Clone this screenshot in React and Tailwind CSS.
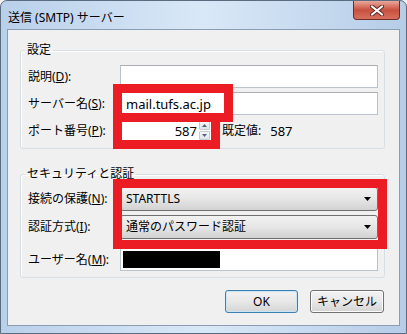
const Key = ({ children }) => <span className="underline">{children}</span>;

function Field({ children, className = '' }) {
  return (
    <div className={`h-[23px] bg-white border border-[#b9c3ce] border-t-[#abadb3] flex items-center ${className}`}>
      {children}
    </div>
  );
}

function Combo({ children }) {
  return (
    <div className="h-[24px] flex items-center justify-between pl-[5px] pr-[6px] rounded-[3px] border border-[#707070] bg-gradient-to-b from-[#f2f2f2] via-[#e6e6e6] to-[#d2d2d2]">
      <span className="leading-[16px]">{children}</span>
      <svg width="7" height="4" viewBox="0 0 7 4"><path d="M0 0h7L3.5 4z" fill="#000" /></svg>
    </div>
  );
}

function Row({ label, children }) {
  return (
    <div className="flex items-center">
      <div className="w-[92px] leading-[16px] whitespace-nowrap">{label}</div>
      <div className="flex-1">{children}</div>
    </div>
  );
}

export default function App() {
  return (
    <div className="relative w-[407px] h-[334px] overflow-hidden bg-[#f0f0f0] font-['Noto_Sans','Noto_Sans_CJK_JP',sans-serif] text-[12px] text-black">
      <div className="flex flex-col h-full rounded-t-[7px] border border-[#5b6c80] bg-gradient-to-r from-[#b9d0ea] via-[#d9e8f7] to-[#b6cde8]">
        {/* title bar */}
        <div className="h-[28px] flex items-start pl-[7px] pr-[6px]">
          <span className="mt-[9px] leading-[16px] text-[12px]">送信 (SMTP) サーバー</span>
          <div className="ml-auto w-[47px] h-[19px] rounded-b-[4px] border border-t-0 border-[#6e2c24] bg-gradient-to-b from-[#e8a79c] via-[#c94f3e] to-[#d6705f] flex items-center justify-center">
            <svg width="14" height="11" viewBox="0 0 14 11">
              <path d="M2 1.5l10 8M12 1.5l-10 8" stroke="#5a2a24" strokeWidth="4" strokeLinecap="round" />
              <path d="M2 1.5l10 8M12 1.5l-10 8" stroke="#fff" strokeWidth="2.2" strokeLinecap="round" />
            </svg>
          </div>
        </div>

        {/* client area */}
        <div className="mx-[6px] h-[297px] border border-[#8a9db3] bg-[#f0f0f0] pt-[12px]">
          <fieldset className="ml-[12px] mr-[14px] border border-[#d5dfe5] rounded-[3px] pl-[7px] pr-[6px] pb-[6px] shadow-[inset_1px_1px_0_#fff]">
            <legend className="-ml-[3px] px-[2px] leading-[16px]">設定</legend>
            <div className="pt-[7px] flex flex-col gap-[4px]">
              <Row label={<>説明(<Key>D</Key>):</>}>
                <Field />
              </Row>
              <Row label={<>サーバー名(<Key>S</Key>):</>}>
                <Field className="pl-[5px]">
                  <span className="leading-[16px] text-[13px]">mail.tufs.ac.jp</span>
                </Field>
              </Row>
              <Row label={<>ポート番号(<Key>P</Key>):</>}>
                <div className="flex items-center">
                  <Field className="w-[92px] justify-end pr-0">
                    <span className="leading-[16px] text-[13px] mr-[2px]">587</span>
                    <div className="w-[11px] h-[19px] flex flex-col gap-[1px] mr-[1px]">
                      <div className="flex-1 flex items-center justify-center border border-[#c4ccd6] rounded-[1px] bg-gradient-to-b from-[#f6f7f9] to-[#dfe4ea]">
                        <svg width="5" height="3" viewBox="0 0 5 3"><path d="M0 3h5L2.5 0z" fill="#4f6482" /></svg>
                      </div>
                      <div className="flex-1 flex items-center justify-center border border-[#c4ccd6] rounded-[1px] bg-gradient-to-b from-[#f6f7f9] to-[#dfe4ea]">
                        <svg width="5" height="3" viewBox="0 0 5 3"><path d="M0 0h5L2.5 3z" fill="#4f6482" /></svg>
                      </div>
                    </div>
                  </Field>
                  <span className="ml-[10px] leading-[16px]">既定値:</span>
                  <span className="ml-[9px] leading-[16px] text-[13px]">587</span>
                </div>
              </Row>
            </div>
          </fieldset>

          <fieldset className="mt-[17px] ml-[12px] mr-[14px] border border-[#d5dfe5] rounded-[3px] pl-[7px] pr-[6px] pb-[6px] shadow-[inset_1px_1px_0_#fff]">
            <legend className="-ml-[3px] px-[2px] leading-[16px]">セキュリティと認証</legend>
            <div className="pt-[5px] flex flex-col">
              <Row label={<>接続の保護(<Key>N</Key>):</>}>
                <Combo>STARTTLS</Combo>
              </Row>
              <div className="mt-[4px]">
                <Row label={<>認証方式(<Key>I</Key>):</>}>
                  <Combo>通常のパスワード認証</Combo>
                </Row>
              </div>
              <div className="mt-[9px]">
                <Row label={<>ユーザー名(<Key>M</Key>):</>}>
                  <Field className="pl-[2px]">
                    <div className="w-[97px] h-[17px] bg-black" />
                  </Field>
                </Row>
              </div>
            </div>
          </fieldset>

          <div className="mt-[12px] flex justify-end gap-[12px] pr-[15px]">
            <button className="w-[73px] h-[23px] rounded-[3px] border border-[#3c7fb1] bg-gradient-to-b from-[#f2f2f2] via-[#e8e8e8] to-[#d4d4d4] shadow-[inset_0_0_0_1px_#c8e4f6] leading-[16px]">
              OK
            </button>
            <button className="w-[74px] h-[23px] rounded-[3px] border border-[#707070] bg-gradient-to-b from-[#f2f2f2] via-[#e8e8e8] to-[#d4d4d4] shadow-[inset_0_0_0_1px_#fcfcfc] leading-[16px]">
              キャンセル
            </button>
          </div>
        </div>
      </div>

      {/* red annotation boxes */}
      <div className="absolute left-[113px] top-[84px] w-[120px] h-[38px] border-[9px] border-[#ec1c24]" />
      <div className="absolute left-[113px] top-[113px] w-[107px] h-[36px] border-[9px] border-[#ec1c24]" />
      <div className="absolute left-[113px] top-[179px] w-[274px] h-[70px] border-[9px] border-[#ec1c24]" />
    </div>
  );
}
